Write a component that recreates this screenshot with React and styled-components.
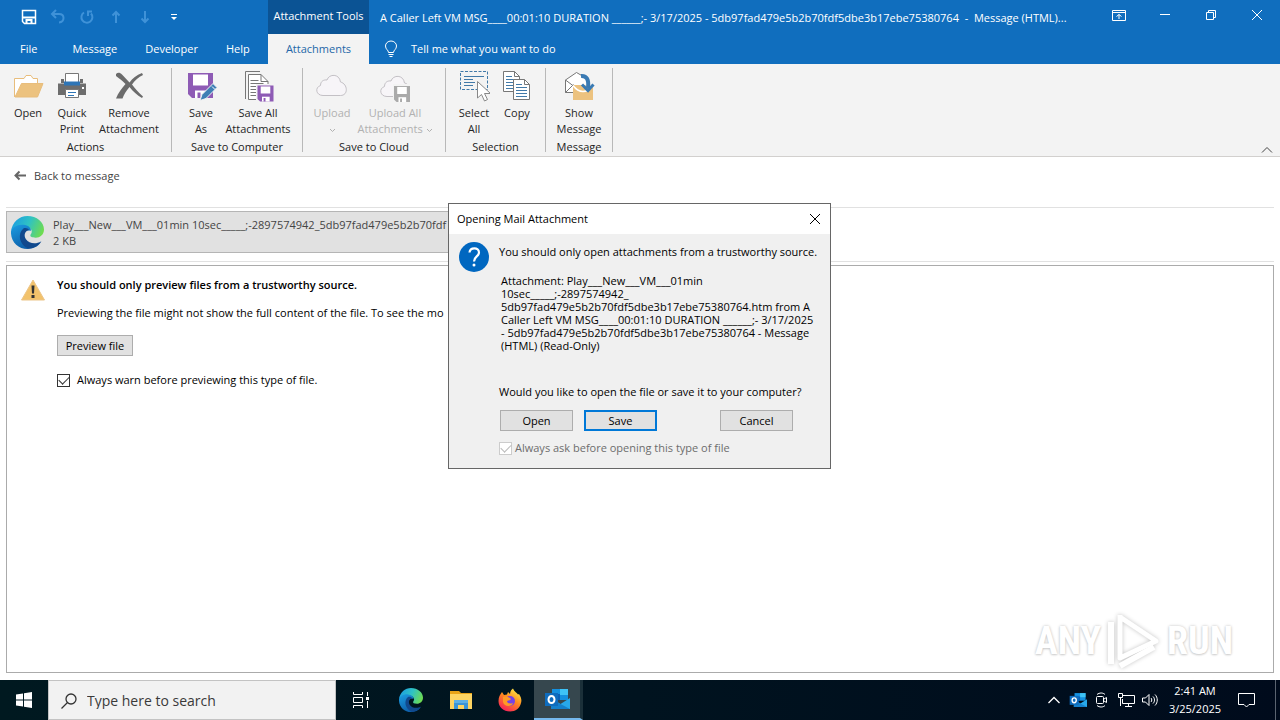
import React from 'react'
import styled, { createGlobalStyle, css } from 'styled-components'

const GlobalStyle = createGlobalStyle`
  * { box-sizing: border-box; }
  body {
    margin: 0;
    background: #fff;
    color: #222;
    font: 11px/16px 'Open Sans', 'Noto Sans', sans-serif;
  }
  button, input { font: inherit; color: inherit; }
  button {
    padding: 0;
    border: 0;
    border-radius: 0;
    background: none;
  }
  svg { display: block; flex: none; }
`

const Screen = styled.div`
  display: flex;
  flex-direction: column;
  min-height: 100vh;
  position: relative;
`

// Title bar and tabs
const Header = styled.header`
  background: #106ebe;
  color: #fff;
`
const HeaderRow = styled.div`
  display: flex;
  height: ${p => p.$height}px;
`
const LeftSide = styled.div`
  display: flex;
  align-items: center;
  gap: 2px;
  flex: 0 0 268px;
`
const QuickAccess = styled(LeftSide)`
  padding-left: 20px;
  gap: 11px;
`
const QuickButton = styled.button`
  width: 18px;
  height: 18px;
  display: grid;
  place-items: center;
  color: ${p => (p.disabled ? '#3f92d8' : '#fff')};
`
const ContextTitle = styled.div`
  flex: 0 0 101px;
  background: #0b5394;
  text-align: center;
  white-space: nowrap;
  line-height: 32px;
`
const WindowTitle = styled.div`
  flex: 1;
  min-width: 0;
  padding: 0 11px;
  line-height: 35px;
  white-space: pre;
  overflow: hidden;
  text-overflow: ellipsis;
`
const WindowButtons = styled.div`
  display: flex;
`
const WindowButton = styled.button`
  width: 46px;
  height: 30px;
  display: grid;
  place-items: center;
`
const Tab = styled.button`
  height: 30px;
  padding: 0 13px;
  white-space: nowrap;
  ${p => p.$file && css`padding: 0 20px;`}
  ${p => p.$active && css`
    flex: 0 0 101px;
    background: #f3f3f3;
    color: #2467a8;
  `}
`
const TellMe = styled.button`
  display: flex;
  align-items: center;
  gap: 13px;
  padding-left: 15px;
`

// Ribbon
const RibbonBar = styled.div`
  display: flex;
  height: 93px;
  background: #f3f3f3;
  border-bottom: 1px solid #d2d0ce;
`
const Group = styled.section`
  display: flex;
  flex-direction: column;
  padding: 2px 6px 0;
  width: ${p => p.$width}px;
  margin: 4px 0;
  border-right: 1px solid #b8b8b8;
`
const Items = styled.div`
  display: flex;
  flex: 1;
`
const Tool = styled.button`
  display: flex;
  flex-direction: column;
  align-items: center;
  gap: 3px;
  width: ${p => p.$width}px;
  line-height: 16px;
  white-space: pre;
  color: ${p => (p.disabled ? '#b1b1b1' : '#262626')};
`
const GroupName = styled.div`
  text-align: center;
  line-height: 10px;
  white-space: nowrap;
`
const ToolText = styled.span`
  display: block;
  text-align: center;
  svg { display: inline-block; vertical-align: middle; }
`
const Collapse = styled.button`
  margin: auto 7px 2px auto;
`

// Attachment strip
const Main = styled.main`
  display: flex;
  flex-direction: column;
  flex: 1;
  padding: 0 6px 7px;
`
const BackRow = styled.div`
  height: 51px;
  padding: 11px 8px 0;
  border-bottom: 1px solid #e1e1e1;
`
const BackButton = styled.button`
  display: flex;
  align-items: center;
  gap: 8px;
  color: #444;
`
const Strip = styled.div`
  padding: 3px 0 8px;
  border-bottom: 1px solid #e1e1e1;
  margin-bottom: 3px;
`
const Attachment = styled.button`
  display: flex;
  align-items: center;
  gap: 9px;
  width: 50%;
  height: 42px;
  padding: 1px 4px 0;
  border: 1px solid #b5b5b5;
  background: #e1e1e1;
  color: #444;
  text-align: left;
  white-space: nowrap;
`
const Preview = styled.section`
  flex: 1;
  display: flex;
  align-items: flex-start;
  gap: 12px;
  padding: 11px 14px;
  border: 1px solid #ababab;
  color: #000;
`
const Notice = styled.div`
  display: flex;
  flex-direction: column;
  align-items: flex-start;
`
const Heading = styled.h1`
  margin: 0 0 12px;
  font-size: 11px;
  font-weight: 600;
  line-height: 16px;
`
const Para = styled.p`
  margin: 0 0 14px;
`
const PushButton = styled.button`
  width: ${p => p.$width}px;
  height: 21px;
  border: 1px solid #adadad;
  background: #e1e1e1;
  color: #000;
  ${p => p.$primary && css`border: 2px solid #0078d7;`}
`
const CheckLabel = styled.label`
  display: flex;
  align-items: center;
  gap: ${p => (p.$dim ? 3 : 7)}px;
  margin-top: ${p => (p.$dim ? 9 : 16)}px;
  color: ${p => (p.$dim ? '#6d6d6d' : '#000')};
`
const CheckBox = styled.input`
  appearance: none;
  width: 13px;
  height: 13px;
  margin: 0;
  display: grid;
  place-items: center;
  border: 1px solid #333;
  background: #fff;
  &:disabled { border-color: #ccc; }
  &:checked::before {
    content: '';
    width: 9px;
    height: 5px;
    margin-bottom: 3px;
    border: solid #333;
    border-width: 0 0 1px 1px;
    transform: rotate(-45deg);
  }
  &:disabled:checked::before { border-color: #bbb; }
`

// Dialog, floats above the message window
const Dialog = styled.div`
  position: absolute;
  top: 203px;
  left: 35%;
  width: 383px;
  border: 1px solid #666;
  background: #f0f0f0;
  color: #000;
`
const DialogBar = styled.div`
  display: flex;
  align-items: center;
  justify-content: space-between;
  height: 30px;
  padding: 0 9px 0 8px;
  background: #fff;
`
const DialogBody = styled.div`
  display: flex;
  align-items: flex-start;
  gap: 10px;
  padding: 8px 12px 12px 10px;
`
const DialogText = styled.div`
  flex: 1;
  padding-top: 2px;
  white-space: nowrap;
`
const Details = styled.p`
  margin: 14px 0 32px 2px;
  line-height: 13px;
`
const DialogButtons = styled.div`
  display: flex;
  gap: 11px;
  margin: 10px 25px 0 1px;
  > :last-child { margin-left: auto; }
`

const Watermark = styled.div`
  position: absolute;
  right: 47px;
  bottom: 48px;
  display: flex;
  align-items: center;
  gap: 5px;
  color: #fff;
  font: bold 38px/62px 'Liberation Sans Narrow', 'Roboto Condensed', 'Open Sans', sans-serif;
  text-shadow: 0 0 3px #c4c4c4, 0 1px 2px #d8d8d8;
  svg { filter: drop-shadow(0 0 2px #c4c4c4); }
`

// Taskbar
const Taskbar = styled.footer`
  display: flex;
  height: 40px;
  background: linear-gradient(90deg, #001920, #00131f 50%, #000b1c);
  color: #fff;
`
const TaskButton = styled.button`
  display: grid;
  place-items: center;
  width: ${p => p.$width || 49}px;
  ${p => p.$active && css`
    background: #36474e;
    border-bottom: 2px solid #76b9ed;
    border-right: 3px solid #1b3039;
  `}
`
const Search = styled.label`
  display: flex;
  align-items: center;
  gap: 10px;
  width: 288px;
  padding: 1px 0 0 12px;
  border: 1px solid #c3c3c3;
  background: #f2f2f2;
  color: #333;
`
const SearchInput = styled.input`
  flex: 1;
  min-width: 0;
  padding: 0;
  border: 0;
  outline: 0;
  background: none;
  font-size: 14px;
  &::placeholder { color: #3a3a3a; opacity: 1; }
`
const Tray = styled.div`
  display: flex;
  margin-left: auto;
  padding-right: 11px;
  border-right: 1px solid #5b6470;
  margin-right: 4px;
`
const Clock = styled.time`
  width: 66px;
  padding-top: 2px;
  line-height: 18px;
  text-align: center;
`

const Svg = ({ w = 32, h = w, vb, children, ...rest }) => (
  <svg width={w} height={h} viewBox={vb || `0 0 ${w} ${h}`} fill="none" stroke="currentColor" aria-hidden="true" {...rest}>
    {children}
  </svg>
)

const Chevron = () => <Svg w={7} h={5}><path d="M1 1l2.500 2.500L6 1" /></Svg>

const FolderIcon = () => (
  <Svg stroke="#e8bd7c">
    <path d="M2.500 27V8.500H12l2-3h5l2 3h4.500v6" fill="#fff" />
    <path d="M3 27l6.500-13.500H31L25.500 27z" fill="#ecc27f" />
  </Svg>
)
const PrinterIcon = () => (
  <Svg>
    <path d="M2 13.500h28V25H2z" fill="#6d6d6d" stroke="none" />
    <path d="M9.500 14V3.500h13V14" fill="#fff" stroke="#777" />
    <path d="M8 11.500h16v4H8z" fill="#2e75b6" stroke="none" />
    <path d="M5 9h3v4H5zM24 9h3v4h-3z" fill="#6d6d6d" stroke="none" />
    <path d="M9.500 19.500h13v8h-13z" fill="#fff" stroke="#777" />
    <path d="M12 22.500h8M12 25.500h6" stroke="#2e75b6" />
    <path d="M26 18h2" stroke="#fff" strokeWidth="2" />
  </Svg>
)
const RemoveIcon = () => (
  <Svg fill="#6b6b6b" stroke="none">
    <path d="M3 4c2-2 4-1.500 6 .5l7.500 8c3-4 7-7.500 12.500-9.500l1 2c-4.500 2-8 5.500-11 9.500 3 4 6.500 8 11 12l-1 1.500c-5-3-9-6.500-12.500-11-3.500 4-5.500 7.500-7 11.500H3c2-5.500 6-10.500 9.500-14.500C9.500 11 6.500 8.500 3 6z" />
  </Svg>
)
const Disk = ({ color = '#8e5bb5', x = 0, y = 0, s = 1 }) => (
  <g transform={`translate(${x} ${y}) scale(${s})`} stroke="none">
    <path d="M0 0h25v25H4l-4-4z" fill={color} />
    <path d="M5 1.500h15v11H5z" fill="#fff" />
    <path d="M7 17.500h12v7.500H7z" fill="#fff" />
    <path d="M9.500 19.500h3V25h-3z" fill={color} />
  </g>
)
const SaveAsIcon = () => (
  <Svg>
    <Disk x={3} y={3} />
    <path d="M15 30.500l2-6L28 13.500l4 4L21 28.500z" fill="#3f7fb5" stroke="#f3f3f3" />
    <path d="M27 16.500l3 3" stroke="#fff" />
  </Svg>
)
const PageLines = ({ stroke }) => <path d="M8.500 10.500h8M8.500 13.500h13M8.500 16.500h13M8.500 19.500h8M8.500 22.500h8M8.500 25.500h8" stroke={stroke} />
const SaveAllIcon = () => (
  <Svg stroke="#777">
    <path d="M3.500 29V1.500H18" />
    <path d="M6.500 29.500v-25H19l7 7v18z" fill="#fff" />
    <path d="M19 4.500v7h7" />
    <PageLines stroke="#777" />
    <path d="M14 14h18v18H14z" fill="#f3f3f3" stroke="none" />
    <Disk x={15.500} y={15.500} s={0.640} />
  </Svg>
)
const cloud = 'M7 25.500c-7 0-8.500-8-2.500-10C4.500 11 8 9.500 11 10c2-6.500 12.500-6.500 13.500 2 7.500 2 8 13.500 0 13.500z'
const CloudIcon = () => <Svg stroke="#c3c0c5"><path d={cloud} fill="#f7f5f8" /></Svg>
const CloudSaveIcon = () => (
  <Svg w={30} h={32} stroke="#c3c0c5">
    <path d={cloud} transform="translate(0 1)" fill="#f7f5f8" />
    <path d="M13 14h18v18H13z" fill="#f3f3f3" stroke="none" />
    <Disk x={14} y={16} s={0.640} color="#aaa" />
  </Svg>
)
const SelectIcon = () => (
  <Svg>
    <path d="M2.500 1.500h27v18h-27z" stroke="#4179a8" strokeDasharray="3 1.500" />
    <path d="M6 6.500h20M6 9.500h9M6 12.500h11M6 15.500h9" stroke="#4179a8" />
    <path d="M19.500 11.500V28l4-3.500 3 6.500 3-1.500-3-6h6z" fill="#fff" stroke="#888" />
  </Svg>
)
const Sheet = ({ x, y }) => (
  <g transform={`translate(${x} ${y})`}>
    <path d="M.5.5h11l5 5v15H.5z" fill="#fff" stroke="#777" />
    <path d="M11.500.5v5h5" stroke="#777" />
    <path d="M3 5.500h6M3 8.500h11M3 11.500h11M3 14.500h11M3 17.500h11" stroke="#4179a8" />
  </g>
)
const CopyIcon = () => <Svg><Sheet x={2} y={1} /><Sheet x={12} y={9} /></Svg>
const ShowIcon = () => (
  <Svg>
    <path d="M2.500 22.500V10l11-7.500 10 6v14z" fill="#fff" stroke="none" />
    <path d="M10.500 22.500h-8V10l11-7.500 6 3.500M2.500 22.500l8-8M2.500 10l8 6" stroke="#777" />
    <path d="M10 15h20v15H10z" fill="#ecc27f" stroke="none" />
    <path d="M10 15.500c6 8 14 8 20 0" stroke="#fff" strokeWidth="1.500" />
    <path d="M18 4c6 0 9 4 8 13" stroke="#f3f3f3" strokeWidth="7" />
    <path d="M18 6c6-.5 8 4 7 12" stroke="#3a7ab3" strokeWidth="4" />
    <path d="M19 14.500l6 6 5.500-6" stroke="#3a7ab3" strokeWidth="3" />
  </Svg>
)
const EdgeIcon = ({ size, id }) => (
  <Svg w={size} vb="0 0 32 32" stroke="none">
    <defs>
      <linearGradient id={id + 'top'} x1="0" y1="0.300" x2="1" y2="0.600">
        <stop stopColor="#1b9de2" /><stop offset=".5" stopColor="#2fc2c4" /><stop offset="1" stopColor="#6fdc4f" />
      </linearGradient>
      <linearGradient id={id + 'low'} x1="0" y1="0" x2="0.600" y2="1">
        <stop stopColor="#1b9de2" /><stop offset="1" stopColor="#0c59a4" />
      </linearGradient>
    </defs>
    <path d="M0 15C1 6 8 0 16 0c9 0 16 6 16 13 0 5-4 8-8 8-4 0-6-1-5-3 3-3 0-8-6-8C6 10 1 13 0 15z" fill={`url(#${id}top)`} />
    <path d="M0 15c1-4 6-7 12-6.500 6 .5 8 4 7 6-6-2-9 4-6 9 3 5 10 6 16 2C26 30 21 32 16 32 7 32-.5 25 0 15z" fill={`url(#${id}low)`} />
    <path d="M12 12c-6 5-4 16 5 19.500 5 0 10-3 12.500-7-6 3.500-12 2-15-2-2.500-4-1-8 3-9-1-1.500-3-2.500-5.500-1.500z" fill="#11498d" />
  </Svg>
)
const WarningIcon = () => (
  <Svg w={24} h={24} stroke="none">
    <path d="M12 3L23.500 23H.5z" fill="#f2c26b" stroke="#ecc58a" strokeLinejoin="round" />
    <path d="M10.500 8.500h3l-.5 8h-2zM10.500 18h3v3h-3z" fill="#333" />
  </Svg>
)
const QuestionIcon = () => (
  <Svg w={30}>
    <circle cx="15" cy="15" r="15" fill="#0067c0" stroke="none" />
    <path d="M10.500 10.500c.5-5.500 9.500-5.500 9.500 0 0 4-5 4-5 9" stroke="#fff" strokeWidth="2.200" />
    <circle cx="15" cy="23" r="1.500" fill="#fff" stroke="none" />
  </Svg>
)
const OutlookIcon = ({ w = 26 }) => (
  <Svg w={w} vb="0 0 26 26" stroke="none">
    <path d="M8 3h16v11H8z" fill="#1490df" />
    <path d="M16 3h8v6h-8z" fill="#50d9ff" opacity=".7" />
    <path d="M8 8h8v6H8z" fill="#0a5fb4" />
    <path d="M7 12l9.500 6L26 12v11H7z" fill="#28a8ea" />
    <path d="M7 13l19 10H7z" fill="#1480cc" />
    <path d="M1 7h13v13H1z" fill="#0f6cbd" />
    <ellipse cx="7.500" cy="13.500" rx="3" ry="3.500" stroke="#fff" strokeWidth="2" />
  </Svg>
)
const ExplorerIcon = () => (
  <Svg w={24} stroke="none">
    <path d="M1 3h9l2 2h11v6H1z" fill="#e8a317" />
    <path d="M1 6h22v15H1z" fill="#fdd462" />
    <path d="M5 21v-7h14v7h-4v-4H9v4z" fill="#3a94d6" />
    <path d="M5 12h14v3H5z" fill="#5db0e5" />
  </Svg>
)
const FirefoxIcon = () => (
  <Svg w={24} stroke="none">
    <defs>
      <linearGradient id="fox" x1=".8" y1="0" x2=".2" y2="1">
        <stop stopColor="#fff04a" /><stop offset=".45" stopColor="#ff8a1e" /><stop offset="1" stopColor="#f5175f" />
      </linearGradient>
    </defs>
    <path d="M4 4l2 3 3-.5L10 4l2 2c0-3 2-5 3-5.500 1 3 4 4 5 6l1-.5c2 3 3 6 2 9-1 5-5.500 8.500-11 8.500C5.500 23.500.5 19 .5 13 .5 9 2 6.500 4 4z" fill="url(#fox)" />
    <circle cx="12" cy="13" r="5" fill="#7542e5" />
    <path d="M5 9c3-1 6 0 8 2-1 2-3 1-4 2.500 1 2.500 4 2.500 6 1.500-1 4-9 4-10-1z" fill="#ff9a26" />
  </Svg>
)

const ribbon = [
  { name: 'Actions', width: 172, tools: [
    { text: 'Open', width: 44, icon: <FolderIcon /> },
    { text: 'Quick\nPrint', width: 44, icon: <PrinterIcon /> },
    { text: 'Remove\nAttachment', width: 70, icon: <RemoveIcon /> },
  ] },
  { name: 'Save to Computer', width: 131, tools: [
    { text: 'Save\nAs', width: 46, icon: <SaveAsIcon /> },
    { text: 'Save All\nAttachments', width: 68, icon: <SaveAllIcon /> },
  ] },
  { name: 'Save to Cloud', width: 143, tools: [
    { text: 'Upload\n', width: 46, icon: <CloudIcon />, menu: true },
    { text: 'Upload All\nAttachments ', width: 80, icon: <CloudSaveIcon />, menu: true },
  ] },
  { name: 'Selection', width: 100, tools: [
    { text: 'Select\nAll', width: 44, icon: <SelectIcon /> },
    { text: 'Copy', width: 42, icon: <CopyIcon /> },
  ] },
  { name: 'Message', width: 67, tools: [
    { text: 'Show\nMessage', width: 54, icon: <ShowIcon /> },
  ] },
]

const TitleBar = () => (
  <HeaderRow $height={34}>
    <QuickAccess>
      <QuickButton aria-label="Save">
        <Svg w={16}><path d="M1.500 1.500h13v13h-11l-2-2z" strokeWidth="1.500" /><path d="M2 8.500h12M5.500 14v-3h5v3" strokeWidth="2" /></Svg>
      </QuickButton>
      <QuickButton aria-label="Undo" disabled>
        <Svg w={16}><path d="M6 1L2 5l4 4M2 5h7c6 0 6 8 0 8.500" strokeWidth="2" /></Svg>
      </QuickButton>
      <QuickButton aria-label="Redo" disabled>
        <Svg w={16}><path d="M5 3.500a5.500 5.500 0 1 0 7 1M13 2.500H9V7" strokeWidth="2" /></Svg>
      </QuickButton>
      <QuickButton aria-label="Previous item" disabled>
        <Svg w={16}><path d="M8 14V3M4.500 6.500L8 3l3.500 3.500" strokeWidth="2" /></Svg>
      </QuickButton>
      <QuickButton aria-label="Next item" disabled>
        <Svg w={16}><path d="M8 2v11M4.500 9.500L8 13l3.500-3.500" strokeWidth="2" /></Svg>
      </QuickButton>
      <QuickButton aria-label="Customize Quick Access Toolbar">
        <Svg w={8}><path d="M1 1.500h6" /><path d="M1 4h6L4 7z" fill="currentColor" stroke="none" /></Svg>
      </QuickButton>
    </QuickAccess>
    <ContextTitle>Attachment Tools</ContextTitle>
    <WindowTitle>
      {'A Caller Left VM MSG____00:01:10 DURATION ______;- 3/17/2025 - 5db97fad479e5b2b70fdf5dbe3b17ebe75380764  -  Message (HTML)...'}
    </WindowTitle>
    <WindowButtons>
      <WindowButton aria-label="Ribbon display options">
        <Svg w={14} h={12}><path d="M.5 1.500h13v10H.5zM.5 3.500h13M7 10V5.500M4.500 7.500L7 5.500l2.500 2" /></Svg>
      </WindowButton>
      <WindowButton aria-label="Minimize"><Svg w={10}><path d="M0 4.500h10" /></Svg></WindowButton>
      <WindowButton aria-label="Restore">
        <Svg w={12}><path d="M1.500 3.500h7v7h-7z" /><path d="M3.500 3V1.500h7v7H9" /></Svg>
      </WindowButton>
      <WindowButton aria-label="Close"><Svg w={10}><path d="M0 0l10 10M10 0L0 10" /></Svg></WindowButton>
    </WindowButtons>
  </HeaderRow>
)

const Ribbon = () => (
  <RibbonBar>
    {ribbon.map(group => (
      <Group key={group.name} $width={group.width}>
        <Items>
          {group.tools.map(tool => (
            <Tool key={tool.text} $width={tool.width} disabled={tool.menu}>
              {tool.icon}
              <ToolText>{tool.text}{tool.menu && <Chevron />}</ToolText>
            </Tool>
          ))}
        </Items>
        <GroupName>{group.name}</GroupName>
      </Group>
    ))}
    <Collapse aria-label="Collapse the ribbon">
      <Svg w={12} h={8} stroke="#444"><path d="M1 6.500l5-5 5 5" /></Svg>
    </Collapse>
  </RibbonBar>
)

const OpenDialog = () => (
  <Dialog role="dialog" aria-labelledby="dialog-title">
    <DialogBar>
      <span id="dialog-title">Opening Mail Attachment</span>
      <button aria-label="Close"><Svg w={12}><path d="M1 1l10 10M11 1L1 11" /></Svg></button>
    </DialogBar>
    <DialogBody>
      <QuestionIcon />
      <DialogText>
        You should only open attachments from a trustworthy source.
        <Details>
          Attachment: Play___New___VM___01min<br />
          10sec_____;-2897574942_<br />
          5db97fad479e5b2b70fdf5dbe3b17ebe75380764.htm from A<br />
          Caller Left VM MSG____00:01:10 DURATION ______;- 3/17/2025<br />
          - 5db97fad479e5b2b70fdf5dbe3b17ebe75380764 - Message<br />
          (HTML) (Read-Only)
        </Details>
        Would you like to open the file or save it to your computer?
        <DialogButtons>
          <PushButton $width={73}>Open</PushButton>
          <PushButton $width={73} $primary>Save</PushButton>
          <PushButton $width={73}>Cancel</PushButton>
        </DialogButtons>
        <CheckLabel $dim>
          <CheckBox type="checkbox" defaultChecked disabled />
          Always ask before opening this type of file
        </CheckLabel>
      </DialogText>
    </DialogBody>
  </Dialog>
)

const App = () => (
  <Screen>
    <GlobalStyle />
    <Header>
      <TitleBar />
      <HeaderRow $height={30}>
        <LeftSide>
          <Tab $file>File</Tab>
          <Tab>Message</Tab>
          <Tab>Developer</Tab>
          <Tab>Help</Tab>
        </LeftSide>
        <Tab $active>Attachments</Tab>
        <TellMe>
          <Svg w={14} h={18}><path d="M4.500 12.500c0-2.500-3-3-3-6.500a5.500 5 0 0 1 11 0c0 3.500-3 4-3 6.500zM4.500 14.500h5M5.500 16.500h3" /></Svg>
          Tell me what you want to do
        </TellMe>
      </HeaderRow>
    </Header>
    <Ribbon />
    <Main>
      <BackRow>
        <BackButton>
          <Svg w={12} stroke="#666"><path d="M1 5.500h11M5.500 1.500l-4 4 4 4" strokeWidth="2" /></Svg>
          Back to message
        </BackButton>
      </BackRow>
      <Strip>
        <Attachment>
          <EdgeIcon size={33} id="file" />
          <span>
            Play___New___VM___01min 10sec_____;-2897574942_5db97fad479e5b2b70fdf
            <br />
            2 KB
          </span>
        </Attachment>
      </Strip>
      <Preview>
        <WarningIcon />
        <Notice>
          <Heading>You should only preview files from a trustworthy source.</Heading>
          <Para>Previewing the file might not show the full content of the file. To see the mo</Para>
          <PushButton $width={76}>Preview file</PushButton>
          <CheckLabel>
            <CheckBox type="checkbox" defaultChecked />
            Always warn before previewing this type of file.
          </CheckLabel>
        </Notice>
      </Preview>
    </Main>
    <Taskbar>
      <TaskButton $width={48} aria-label="Start">
        <Svg w={16} fill="#fff" stroke="none"><path d="M0 2.500l7-1V7.500H0zM8 1.300L16 0v7.500H8zM0 8.500h7v6l-7-1zM8 8.500h8V16l-8-1.300z" /></Svg>
      </TaskButton>
      <Search>
        <Svg w={16}><circle cx="10" cy="6" r="5" strokeWidth="1.300" /><path d="M6.500 9.500L.5 15.500" strokeWidth="1.300" /></Svg>
        <SearchInput placeholder="Type here to search" aria-label="Search" />
      </Search>
      <TaskButton aria-label="Task view">
        <Svg w={18} h={16}><path d="M1.500 0v2.500h9V0M1.500 16v-2.500h9V16M1.500 5.500h9v5h-9zM15.500 0v4M15.500 9v7" /><path d="M14 5h3v3h-3z" fill="#fff" stroke="none" /></Svg>
      </TaskButton>
      <TaskButton $width={51} aria-label="Microsoft Edge"><EdgeIcon size={24} id="bar" /></TaskButton>
      <TaskButton aria-label="File Explorer"><ExplorerIcon /></TaskButton>
      <TaskButton aria-label="Firefox"><FirefoxIcon /></TaskButton>
      <TaskButton $active aria-label="Outlook"><OutlookIcon /></TaskButton>
      <Tray>
        <TaskButton $width={24} aria-label="Show hidden icons"><Svg w={12} h={8}><path d="M.5 7L6 1.500 11.500 7" strokeWidth="1.300" /></Svg></TaskButton>
        <TaskButton $width={24} aria-label="Outlook notifications"><OutlookIcon w={18} /></TaskButton>
        <TaskButton $width={24} aria-label="Meet now">
          <Svg w={14} h={16}><rect x="1.500" y="4.500" width="7" height="7" rx="1" /><path d="M9 7l2.500-1.500v5L9 9M2 2.500c2.500-2 6-2 8 0M2 13.500c2.500 2 6 2 8 0" /></Svg>
        </TaskButton>
        <TaskButton $width={24} aria-label="Network">
          <Svg w={17} h={14}><path d="M5 2.500h11.500v8H4.500V6M7 13.500h7M10.500 11v2.500M.5.5h4v4h-4zM2.500 5v8" /></Svg>
        </TaskButton>
        <TaskButton $width={24} aria-label="Volume">
          <Svg w={17} h={14}><path d="M.5 5h3L7 1.500v11L3.500 9h-3zM9 5c1 1 1 3 0 4M11 3.500c2 2 2 5 0 7M13 1.500c3 3 3 8 0 11" /></Svg>
        </TaskButton>
        <Clock>2:41 AM<br />3/25/2025</Clock>
        <TaskButton $width={36} aria-label="Notifications">
          <Svg w={17} h={16}><path d="M.5 1.500h16v11H11L8.500 15 6 12.500H.5z" /></Svg>
        </TaskButton>
      </Tray>
    </Taskbar>
    <Watermark>
      ANY
      <Svg w={56} h={62} stroke="#fff" strokeWidth="6" strokeLinejoin="round">
        <path d="M14 5v43L50 31 14 7" strokeWidth="5" />
        <path d="M5 12v42M14 56l34-19" />
      </Svg>
      RUN
    </Watermark>
    <OpenDialog />
  </Screen>
)

export default App
